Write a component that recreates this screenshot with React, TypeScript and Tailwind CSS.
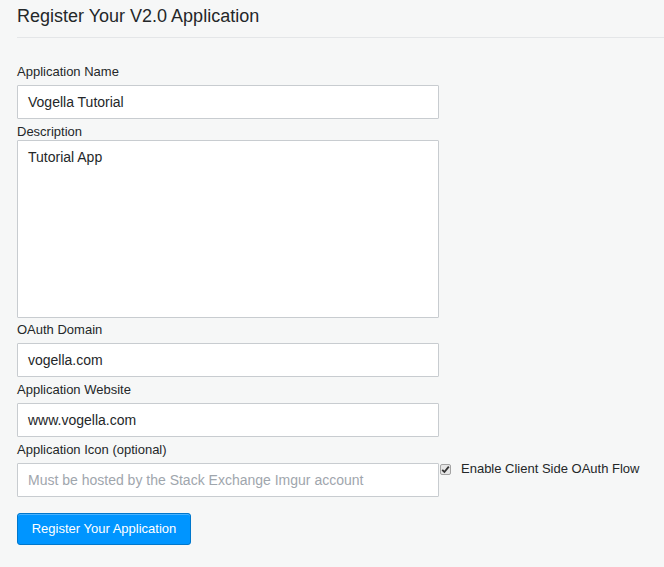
import React from "react";

const font = { fontFamily: '"Liberation Sans", Arial, Helvetica, sans-serif' };

function Label({ children, className = "" }: { children: React.ReactNode; className?: string }) {
  return <div className={`text-[13px] leading-[17px] text-[#242729] ${className}`}>{children}</div>;
}

function Input({ value, placeholder, className = "" }: { value?: string; placeholder?: string; className?: string }) {
  return (
    <div
      className={`w-[422px] h-[34px] bg-white border border-[#c8ccd0] rounded-[1px] flex items-center px-[10px] text-[14px] ${className}`}
    >
      {value ? (
        <span className="text-[#242729]">{value}</span>
      ) : (
        <span className="text-[#9fa6ad]">{placeholder}</span>
      )}
    </div>
  );
}

export default function App() {
  return (
    <div className="min-h-[567px] w-full bg-[#f6f7f7] pl-[17px]" style={font}>
      <div className="pt-[4px] text-[18px] leading-[24px] text-[#242729]">Register Your V2.0 Application</div>
      <div className="mt-[9px] h-px bg-[#e4e6e8]" />

      <Label className="mt-[25px]">Application Name</Label>
      <Input className="mt-[5px]" value="Vogella Tutorial" />

      <Label className="mt-[4px]">Description</Label>
      <div className="w-[422px] h-[178px] bg-white border border-[#c8ccd0] rounded-[1px] px-[10px] pt-[7px] text-[14px] leading-[18px] text-[#242729]">
        Tutorial App
      </div>

      <Label className="mt-[3px]">OAuth Domain</Label>
      <Input className="mt-[5px]" value="vogella.com" />

      <Label className="mt-[4px]">Application Website</Label>
      <Input className="mt-[5px]" value="www.vogella.com" />

      <Label className="mt-[4px]">Application Icon (optional)</Label>
      <div className="mt-[5px] flex items-start">
        <Input placeholder="Must be hosted by the Stack Exchange Imgur account" />
        <div className="flex items-center -mt-[3px] ml-px h-[17px]">
          <span className="mt-[1px] w-[11px] h-[11px] border border-[#a3a3a3] bg-[#e6e6e6] rounded-[2px] flex items-center justify-center">
            <svg width="9" height="9" viewBox="0 0 9 9">
              <path d="M1.2 4.8 L3.4 7 L7.8 1.6" stroke="#333" strokeWidth="1.8" fill="none" />
            </svg>
          </span>
          <span className="ml-[10px] text-[13px] leading-[17px] text-[#242729]">Enable Client Side OAuth Flow</span>
        </div>
      </div>

      <button className="mt-[16px] h-[32px] w-[174px] pb-[2px] bg-[#0095ff] border border-[#0077cc] rounded-[3px] text-white text-[13px] leading-[17px] flex items-center justify-center shadow-[inset_0_1px_0_rgba(102,191,255,0.7)]">
        Register Your Application
      </button>
    </div>
  );
}
